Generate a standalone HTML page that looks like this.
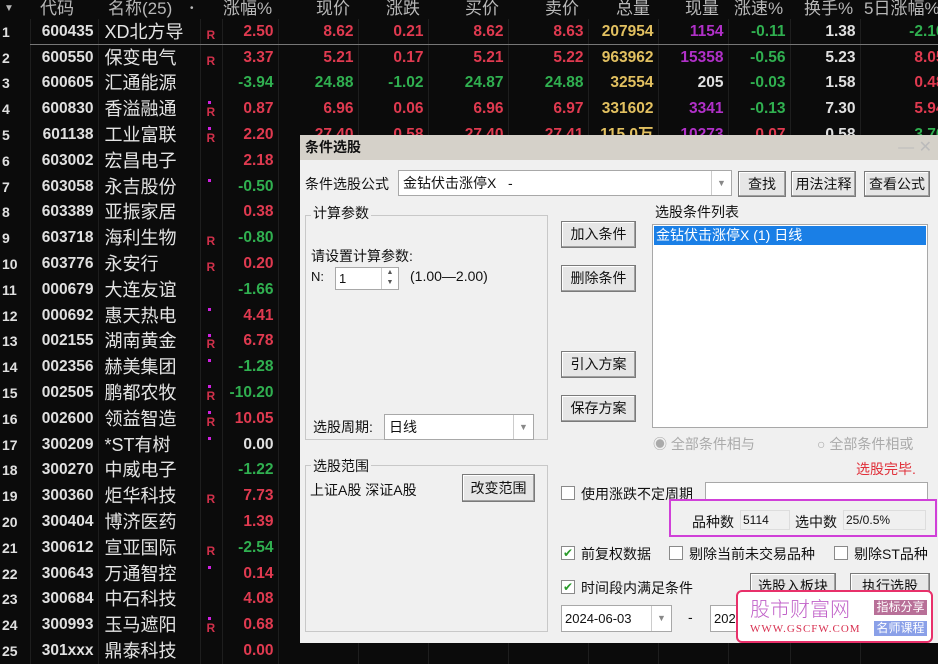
<!DOCTYPE html>
<html><head><meta charset="utf-8">
<style>
*{margin:0;padding:0;box-sizing:border-box}
body{width:938px;height:646px;overflow:hidden;background:#0b0b0b;font-family:"Liberation Sans","Noto Sans CJK SC",sans-serif;position:relative}
.hd{position:absolute;top:0;height:19px;color:#b8b8b8;font-size:17px;line-height:18px;white-space:nowrap}
table{position:absolute;left:0;top:19px;border-collapse:collapse;table-layout:fixed;width:945px}
tr{height:25.8px}
td{height:25.8px;padding:0 4px;font-size:15.5px;font-weight:bold;color:#e0e0e0;text-align:right;white-space:nowrap;overflow:hidden;border-right:1px solid #1e1e1e;line-height:24px}
td.n{text-align:left;padding-left:2px;font-size:14px}
td.nm{text-align:left;font-weight:normal;font-size:18px;color:#e4e4e4;padding-left:6px}
td.m{text-align:left;padding-left:6px;font-size:12px;color:#d0304a;position:relative;line-height:12px}
td.m b{position:relative;top:3px}
.dot{position:absolute;left:7px;top:5px;width:3px;height:3px;background:#d020e0}
.r{color:#e03a50}.g{color:#30b050}.y{color:#e2c060}.p{color:#b030c8}
#dlg{position:absolute;left:300px;top:135px;width:638px;height:508px;background:#f0f0f0;font-size:14px;color:#111}
#tb{height:25px;background:#d5d1c9;font-weight:bold;font-size:14px;line-height:25px;padding-left:5px}
.a{position:absolute;white-space:nowrap}
.btn{position:absolute;background:#e6e6e6;border:1px solid #7a7a7a;box-shadow:inset -1px -1px 0 #a0a0a0,inset 1px 1px 0 #fff;text-align:center;font-size:14px}
.box{position:absolute;background:#fff;border:1px solid #a8a8a8}
.grp{position:absolute;border:1px solid #c8c8c8}
.gl{position:absolute;background:#f0f0f0;padding:0 2px;font-size:14px}
.dd{position:absolute;right:0;top:0;bottom:0;width:20px;border-left:1px solid #ccc;color:#888;font-size:9px;text-align:center}
.cb{position:absolute;width:14px;height:14px;border:1px solid #8a8a8a;background:#fff;font-size:12px;line-height:12px;color:#2a9a2a;text-align:center}
</style></head><body>
<div class="hd" style="left:4px;font-size:10px">▼</div>
<div class="hd" style="left:40px">代码</div>
<div class="hd" style="left:108px">名称(25)</div>
<div class="hd" style="left:190px;font-size:10px">•</div>
<div class="hd" style="left:223px">涨幅%</div>
<div class="hd" style="left:316px">现价</div>
<div class="hd" style="left:386px">涨跌</div>
<div class="hd" style="left:465px">买价</div>
<div class="hd" style="left:545px">卖价</div>
<div class="hd" style="left:616px">总量</div>
<div class="hd" style="left:685px">现量</div>
<div class="hd" style="left:734px">涨速%</div>
<div class="hd" style="left:804px">换手%</div>
<div class="hd" style="left:864px">5日涨幅%</div>
<table>
<colgroup><col style="width:30px"><col style="width:68px"><col style="width:102px"><col style="width:22px"><col style="width:56px"><col style="width:80px"><col style="width:70px"><col style="width:80px"><col style="width:80px"><col style="width:70px"><col style="width:70px"><col style="width:62px"><col style="width:70px"><col style="width:85px"></colgroup>
<tr><td class="n">1</td><td>600435</td><td class="nm">XD北方导</td><td class="m"><b>R</b></td><td class="r">2.50</td><td class="r">8.62</td><td class="r">0.21</td><td class="r">8.62</td><td class="r">8.63</td><td class="y">207954</td><td class="p">1154</td><td class="g">-0.11</td><td>1.38</td><td class="g" style="padding-right:0">-2.10</td></tr>
<tr><td class="n">2</td><td>600550</td><td class="nm">保变电气</td><td class="m"><b>R</b></td><td class="r">3.37</td><td class="r">5.21</td><td class="r">0.17</td><td class="r">5.21</td><td class="r">5.22</td><td class="y">963962</td><td class="p">15358</td><td class="g">-0.56</td><td>5.23</td><td class="r" style="padding-right:0">8.05</td></tr>
<tr><td class="n">3</td><td>600605</td><td class="nm">汇通能源</td><td class="m"></td><td class="g">-3.94</td><td class="g">24.88</td><td class="g">-1.02</td><td class="g">24.87</td><td class="g">24.88</td><td class="y">32554</td><td>205</td><td class="g">-0.03</td><td>1.58</td><td class="r" style="padding-right:0">0.48</td></tr>
<tr><td class="n">4</td><td>600830</td><td class="nm">香溢融通</td><td class="m"><i class="dot"></i><b>R</b></td><td class="r">0.87</td><td class="r">6.96</td><td class="r">0.06</td><td class="r">6.96</td><td class="r">6.97</td><td class="y">331602</td><td class="p">3341</td><td class="g">-0.13</td><td>7.30</td><td class="r" style="padding-right:0">5.94</td></tr>
<tr><td class="n">5</td><td>601138</td><td class="nm">工业富联</td><td class="m"><i class="dot"></i><b>R</b></td><td class="r">2.20</td><td class="r">27.40</td><td class="r">0.58</td><td class="r">27.40</td><td class="r">27.41</td><td class="y">115.0万</td><td class="p">10273</td><td class="r">0.07</td><td>0.58</td><td class="g" style="padding-right:0">3.70</td></tr>
<tr><td class="n">6</td><td>603002</td><td class="nm">宏昌电子</td><td class="m"></td><td class="r">2.18</td><td></td><td></td><td></td><td></td><td></td><td></td><td></td><td></td><td></td></tr>
<tr><td class="n">7</td><td>603058</td><td class="nm">永吉股份</td><td class="m"><i class="dot"></i></td><td class="g">-0.50</td><td></td><td></td><td></td><td></td><td></td><td></td><td></td><td></td><td></td></tr>
<tr><td class="n">8</td><td>603389</td><td class="nm">亚振家居</td><td class="m"></td><td class="r">0.38</td><td></td><td></td><td></td><td></td><td></td><td></td><td></td><td></td><td></td></tr>
<tr><td class="n">9</td><td>603718</td><td class="nm">海利生物</td><td class="m"><b>R</b></td><td class="g">-0.80</td><td></td><td></td><td></td><td></td><td></td><td></td><td></td><td></td><td></td></tr>
<tr><td class="n">10</td><td>603776</td><td class="nm">永安行</td><td class="m"><b>R</b></td><td class="r">0.20</td><td></td><td></td><td></td><td></td><td></td><td></td><td></td><td></td><td></td></tr>
<tr><td class="n">11</td><td>000679</td><td class="nm">大连友谊</td><td class="m"></td><td class="g">-1.66</td><td></td><td></td><td></td><td></td><td></td><td></td><td></td><td></td><td></td></tr>
<tr><td class="n">12</td><td>000692</td><td class="nm">惠天热电</td><td class="m"><i class="dot"></i></td><td class="r">4.41</td><td></td><td></td><td></td><td></td><td></td><td></td><td></td><td></td><td></td></tr>
<tr><td class="n">13</td><td>002155</td><td class="nm">湖南黄金</td><td class="m"><i class="dot"></i><b>R</b></td><td class="r">6.78</td><td></td><td></td><td></td><td></td><td></td><td></td><td></td><td></td><td></td></tr>
<tr><td class="n">14</td><td>002356</td><td class="nm">赫美集团</td><td class="m"><i class="dot"></i></td><td class="g">-1.28</td><td></td><td></td><td></td><td></td><td></td><td></td><td></td><td></td><td></td></tr>
<tr><td class="n">15</td><td>002505</td><td class="nm">鹏都农牧</td><td class="m"><i class="dot"></i><b>R</b></td><td class="g" style="padding-right:4px">-10.20</td><td></td><td></td><td></td><td></td><td></td><td></td><td></td><td></td><td></td></tr>
<tr><td class="n">16</td><td>002600</td><td class="nm">领益智造</td><td class="m"><i class="dot"></i><b>R</b></td><td class="r">10.05</td><td></td><td></td><td></td><td></td><td></td><td></td><td></td><td></td><td></td></tr>
<tr><td class="n">17</td><td>300209</td><td class="nm">*ST有树</td><td class="m"><i class="dot"></i></td><td>0.00</td><td></td><td></td><td></td><td></td><td></td><td></td><td></td><td></td><td></td></tr>
<tr><td class="n">18</td><td>300270</td><td class="nm">中威电子</td><td class="m"></td><td class="g">-1.22</td><td></td><td></td><td></td><td></td><td></td><td></td><td></td><td></td><td></td></tr>
<tr><td class="n">19</td><td>300360</td><td class="nm">炬华科技</td><td class="m"><b>R</b></td><td class="r">7.73</td><td></td><td></td><td></td><td></td><td></td><td></td><td></td><td></td><td></td></tr>
<tr><td class="n">20</td><td>300404</td><td class="nm">博济医药</td><td class="m"></td><td class="r">1.39</td><td></td><td></td><td></td><td></td><td></td><td></td><td></td><td></td><td></td></tr>
<tr><td class="n">21</td><td>300612</td><td class="nm">宣亚国际</td><td class="m"><b>R</b></td><td class="g">-2.54</td><td></td><td></td><td></td><td></td><td></td><td></td><td></td><td></td><td></td></tr>
<tr><td class="n">22</td><td>300643</td><td class="nm">万通智控</td><td class="m"><i class="dot"></i></td><td class="r">0.14</td><td></td><td></td><td></td><td></td><td></td><td></td><td></td><td></td><td></td></tr>
<tr><td class="n">23</td><td>300684</td><td class="nm">中石科技</td><td class="m"></td><td class="r">4.08</td><td></td><td></td><td></td><td></td><td></td><td></td><td></td><td></td><td></td></tr>
<tr><td class="n">24</td><td>300993</td><td class="nm">玉马遮阳</td><td class="m"><i class="dot"></i><b>R</b></td><td class="r">0.68</td><td></td><td></td><td></td><td></td><td></td><td></td><td></td><td></td><td></td></tr>
<tr><td class="n">25</td><td>301xxx</td><td class="nm">鼎泰科技</td><td class="m"></td><td class="r">0.00</td><td></td><td></td><td></td><td></td><td></td><td></td><td></td><td></td><td></td></tr>
</table>
<div style="position:absolute;left:30px;top:44px;width:908px;height:1px;background:#777"></div>

<div id="dlg">
<div id="tb">条件选股<span style="position:absolute;right:6px;top:0;color:#bbb;font-weight:normal;font-size:16px">—&nbsp;✕</span></div>
<div class="a" style="left:5px;top:39px">条件选股公式</div>
<div class="box" style="left:98px;top:35px;width:334px;height:26px;line-height:24px;padding-left:4px">金钻伏击涨停X &nbsp;&nbsp;-<div class="dd" style="line-height:24px">▼</div></div>
<div class="btn" style="left:438px;top:36px;width:48px;height:26px;line-height:24px">查找</div>
<div class="btn" style="left:491px;top:36px;width:65px;height:26px;line-height:24px">用法注释</div>
<div class="btn" style="left:564px;top:36px;width:66px;height:26px;line-height:24px">查看公式</div>

<div class="grp" style="left:5px;top:80px;width:243px;height:225px"></div>
<div class="gl" style="left:11px;top:68px">计算参数</div>
<div class="a" style="left:11px;top:111px">请设置计算参数:</div>
<div class="a" style="left:11px;top:134px;font-size:13px">N:</div>
<div class="box" style="left:35px;top:132px;width:64px;height:23px;line-height:21px;padding-left:3px;font-size:13px">1<div style="position:absolute;right:0;top:0;width:17px;height:21px;border-left:1px solid #ccc;font-size:7px;line-height:10px;text-align:center;color:#555">▲<br>▼</div></div>
<div class="a" style="left:110px;top:133px;font-size:14px">(1.00—2.00)</div>
<div class="a" style="left:13px;top:282px">选股周期:</div>
<div class="box" style="left:84px;top:279px;width:150px;height:26px;line-height:24px;padding-left:4px">日线<div class="dd" style="line-height:24px">▼</div></div>

<div class="btn" style="left:261px;top:86px;width:75px;height:27px;line-height:25px">加入条件</div>
<div class="btn" style="left:261px;top:130px;width:75px;height:27px;line-height:25px">删除条件</div>
<div class="btn" style="left:261px;top:216px;width:75px;height:27px;line-height:25px">引入方案</div>
<div class="btn" style="left:261px;top:260px;width:75px;height:27px;line-height:25px">保存方案</div>

<div class="a" style="left:355px;top:67px">选股条件列表</div>
<div class="box" style="left:352px;top:89px;width:276px;height:204px"><div style="margin:1px;height:19px;background:#1a7fe6;color:#fff;line-height:19px;padding-left:2px">金钻伏击涨停X (1) 日线</div></div>
<div class="a" style="left:353px;top:299px;color:#aaa">◉ 全部条件相与</div>
<div class="a" style="left:517px;top:299px;color:#aaa">○ 全部条件相或</div>
<div class="a" style="left:556px;top:324px;color:#e0303a">选股完毕.</div>

<div class="grp" style="left:5px;top:330px;width:243px;height:167px"></div>
<div class="gl" style="left:11px;top:321px">选股范围</div>
<div class="a" style="left:10px;top:345px">上证A股 深证A股</div>
<div class="btn" style="left:162px;top:339px;width:73px;height:28px;line-height:26px">改变范围</div>

<div class="cb" style="left:261px;top:351px"></div>
<div class="a" style="left:281px;top:349px">使用涨跌不定周期</div>
<div class="box" style="left:405px;top:347px;width:223px;height:18px"></div>
<div style="position:absolute;left:369px;top:364px;width:268px;height:38px;border:2px solid #d040d8;background:#f0f0f0"></div>
<div class="a" style="left:392px;top:377px">品种数</div>
<div class="box" style="left:440px;top:375px;width:50px;height:20px;background:#f0f0f0;border-color:#ddd;font-size:12px;line-height:18px;padding-left:2px">5114</div>
<div class="a" style="left:495px;top:377px">选中数</div>
<div class="box" style="left:543px;top:375px;width:83px;height:20px;background:#f0f0f0;border-color:#ddd;font-size:12px;line-height:18px;padding-left:2px">25/0.5%</div>

<div class="cb" style="left:261px;top:411px">✔</div><div class="a" style="left:281px;top:409px">前复权数据</div>
<div class="cb" style="left:369px;top:411px"></div><div class="a" style="left:389px;top:409px">剔除当前未交易品种</div>
<div class="cb" style="left:534px;top:411px"></div><div class="a" style="left:554px;top:409px">剔除ST品种</div>
<div class="cb" style="left:261px;top:445px">✔</div><div class="a" style="left:281px;top:443px">时间段内满足条件</div>
<div class="btn" style="left:450px;top:438px;width:86px;height:27px;line-height:25px">选股入板块</div>
<div class="btn" style="left:550px;top:438px;width:80px;height:27px;line-height:25px">执行选股</div>
<div class="box" style="left:261px;top:470px;width:111px;height:27px;line-height:25px;padding-left:3px;font-size:13px">2024-06-03<div class="dd" style="line-height:25px">▼</div></div>
<div class="a" style="left:388px;top:474px">-</div>
<div class="box" style="left:410px;top:470px;width:111px;height:27px;line-height:25px;padding-left:3px;font-size:13px">2024-06-03</div>
</div>

<div style="position:absolute;left:736px;top:590px;width:197px;height:53px;background:#fff;border:2px solid #e8306a;border-radius:6px">
<div class="a" style="left:12px;top:4px;font-size:20px;color:#c060c8;font-family:'Noto Sans CJK SC',sans-serif;font-weight:300;line-height:24px">股市财富网</div>
<div class="a" style="left:12px;top:31px;font-size:11px;color:#d83050;font-family:'Liberation Serif',serif;letter-spacing:1px">WWW.GSCFW.COM</div>
<div class="a" style="left:136px;top:8px;width:53px;height:15px;background:#b87098;color:#fff;font-size:12px;line-height:15px;text-align:center">指标分享</div>
<div class="a" style="left:136px;top:29px;width:53px;height:15px;background:#8aa0e8;color:#fff;font-size:12px;line-height:15px;text-align:center">名师课程</div>
</div>
</body></html>
